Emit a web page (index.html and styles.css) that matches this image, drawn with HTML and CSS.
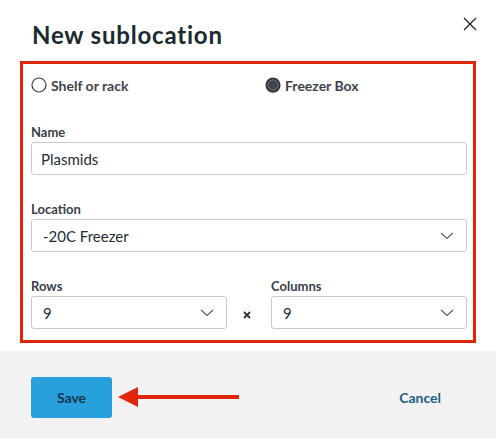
FILE: index.html
```html
<!DOCTYPE html>
<html>
<head>
	<title>New sublocation</title>
	<link rel="stylesheet" href="styles.css">
</head>
<body>
	<div class="dialog">
		<div class="header">
			<h1>New sublocation</h1>
			<svg class="close" width="14" height="14" viewBox="0 0 14 14">
				<path d="M1 1 L13 13 M13 1 L1 13" stroke="#222" stroke-width="1.3" fill="none"/>
			</svg>
		</div>

		<div class="form_box">
			<div class="radios">
				<label class="radio first">
					<svg width="16" height="16" viewBox="0 0 16 16"><circle cx="8" cy="8" r="7" fill="#fff" stroke="#3a3f45" stroke-width="1.2"/></svg>
					Shelf or rack
				</label>
				<label class="radio">
					<svg width="16" height="17" viewBox="0 0 16 17">
						<circle cx="8" cy="9" r="7.5" fill="#c9cbce"/>
						<circle cx="8" cy="8" r="7.5" fill="#2f333a"/>
						<circle cx="8" cy="8" r="5.2" fill="#40454d" stroke="#72767c" stroke-width="1"/>
					</svg>
					Freezer Box
				</label>
			</div>

			<div class="field">
				<div class="label">Name</div>
				<div class="input">Plasmids</div>
			</div>

			<div class="field">
				<div class="label">Location</div>
				<div class="input select">
					<span>-20C Freezer</span>
					<svg width="14" height="8" viewBox="0 0 14 8"><path d="M1 1 L7 6.5 L13 1" stroke="#555b60" stroke-width="1.1" fill="none"/></svg>
				</div>
			</div>

			<div class="field split">
				<div class="half">
					<div class="label">Rows</div>
					<div class="input select">
						<span>9</span>
						<svg width="14" height="8" viewBox="0 0 14 8"><path d="M1 1 L7 6.5 L13 1" stroke="#555b60" stroke-width="1.1" fill="none"/></svg>
					</div>
				</div>
				<div class="times">
					<svg width="8" height="8" viewBox="0 0 8 8"><path d="M1 1 L7 7 M7 1 L1 7" stroke="#2b3338" stroke-width="1.8" fill="none"/></svg>
				</div>
				<div class="half">
					<div class="label">Columns</div>
					<div class="input select">
						<span>9</span>
						<svg width="14" height="8" viewBox="0 0 14 8"><path d="M1 1 L7 6.5 L13 1" stroke="#555b60" stroke-width="1.1" fill="none"/></svg>
					</div>
				</div>
			</div>
		</div>

		<div class="footer">
			<button type="button" class="save">Save</button>
			<svg class="arrow" width="122" height="20" viewBox="0 0 122 20">
				<path d="M0 10 L20 0 L20 20 Z" fill="#e0250a"/>
				<rect x="19" y="8" width="102" height="4" fill="#e0250a"/>
			</svg>
			<span class="cancel">Cancel</span>
		</div>
	</div>
</body>
</html>
```

FILE: styles.css
```css
body {
	margin: 0;
	background: #fff;
	font-family: Lato, "Open Sans", sans-serif;
	color: #1f2d35;
}
.header {
	display: flex;
	justify-content: space-between;
	align-items: flex-start;
	height: 61px;
	padding: 0 19px 0 32px;
	box-sizing: border-box;
}
h1 {
	margin: 0;
	padding-top: 20px;
	font-size: 24px;
	line-height: 30px;
	font-weight: 700;
	letter-spacing: 0.8px;
	color: #1b2a31;
}
.close {
	margin-top: 17px;
}
.form_box {
	margin: 0 20px 8px 20px;
	border: 3px solid #e0250a;
	padding: 11px 6px 11px 8px;
}
.radios {
	display: flex;
	align-items: center;
	height: 20px;
	padding-bottom: 3px;
}
.radio {
	display: flex;
	align-items: center;
	gap: 4px;
	font-size: 14px;
	font-weight: 700;
	color: #3d4349;
}
.radio.first {
	width: 234px;
}
.field {
	margin-top: 26px;
}
.label {
	font-size: 13px;
	line-height: 16px;
	font-weight: 700;
	color: #3a4047;
	margin-bottom: 2px;
}
.input {
	height: 33px;
	border: 1px solid #c7cacd;
	border-radius: 3px;
	box-sizing: border-box;
	padding: 0 12px 0 9px;
	display: flex;
	align-items: center;
	font-size: 15px;
	color: #1f2d35;
}
.select {
	justify-content: space-between;
	padding-left: 11px;
}
.split {
	display: flex;
	align-items: flex-end;
}
.half {
	width: 196px;
}
.times {
	width: 44px;
	height: 33px;
	display: flex;
	align-items: center;
	justify-content: center;
	padding-right: 5px;
	padding-top: 4px;
	box-sizing: border-box;
}
.footer {
	background: #f1f2f1;
	height: 87px;
	display: flex;
	align-items: center;
	padding: 0 55px 0 31px;
	box-sizing: border-box;
}
.save {
	width: 81px;
	height: 41px;
	border: none;
	border-radius: 3px;
	background: #27a0dc;
	font-family: Lato, sans-serif;
	font-size: 14px;
	font-weight: 700;
	color: #17354a;
	margin-top: 5px;
}
.arrow {
	margin-left: 6px;
	margin-top: 5px;
}
.cancel {
	margin-left: auto;
	margin-top: 5px;
	font-size: 14px;
	font-weight: 700;
	color: #1e5e84;
}
```
